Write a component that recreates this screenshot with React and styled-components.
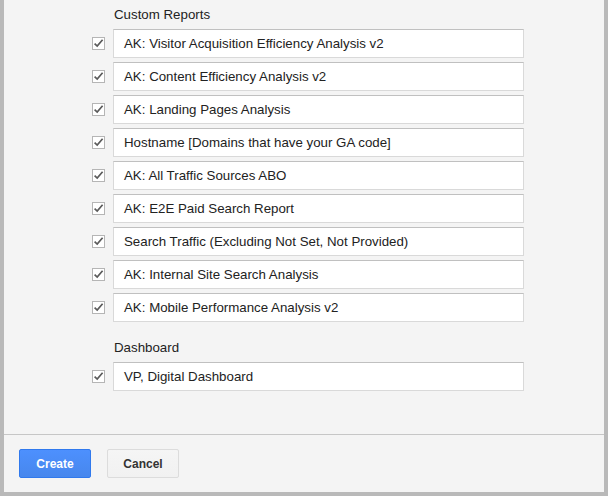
import React from 'react'
import styled, { createGlobalStyle } from 'styled-components'

const GlobalStyle = createGlobalStyle`
  html, body {
    margin: 0;
    padding: 0;
    background: #f4f4f4;
  }
  body {
    font-family: "Liberation Sans", Arial, sans-serif;
  }
`

const Frame = styled.div`
  box-sizing: border-box;
  width: 608px;
  height: 496px;
  background: #f4f4f4;
  border: 4px solid #b9b9b9;
  border-top: none;
  display: flex;
  flex-direction: column;
`

const Body = styled.div`
  flex: 1;
  padding: 7px 0 0 88px;
  display: flex;
  flex-direction: column;
  gap: 18px;
`

const Section = styled.div`
  display: flex;
  flex-direction: column;
`

const Heading = styled.div`
  margin-left: 22px;
  margin-bottom: 6px;
  font-size: 13.3px;
  line-height: 16px;
  color: #222;
`

const List = styled.div`
  display: flex;
  flex-direction: column;
  gap: 4px;
`

const Row = styled.label`
  display: flex;
  align-items: center;
  gap: 8px;
`

const Check = styled.svg`
  flex: none;
  width: 13px;
  height: 13px;
  margin-top: -1px;
`

const Field = styled.div`
  box-sizing: border-box;
  width: 411px;
  height: 29px;
  padding: 0 10px;
  display: flex;
  align-items: center;
  background: #fff;
  border: 1px solid #d9d9d9;
  border-top-color: #c0c0c0;
  font-size: 13.3px;
  color: #222;
  white-space: nowrap;
`

const Footer = styled.div`
  box-sizing: border-box;
  flex: none;
  height: 58px;
  border-top: 1px solid #c6c6c6;
  padding: 14px 0 0 15px;
  display: flex;
  align-items: flex-start;
  gap: 16px;
`

const Button = styled.button`
  box-sizing: border-box;
  height: 29px;
  min-width: ${p => p.w}px;
  padding: 0 8px;
  font-family: "Liberation Sans", Arial, sans-serif;
  font-size: 12px;
  font-weight: bold;
  border-radius: 2px;
  cursor: pointer;
  color: ${p => (p.primary ? '#fff' : '#333')};
  background: ${p => (p.primary ? 'linear-gradient(#4d90fe, #4787ed)' : 'linear-gradient(#f5f5f5, #f1f1f1)')};
  border: 1px solid ${p => (p.primary ? '#3079ed' : '#dcdcdc')};
`

const CheckBox = () => (
  <Check viewBox="0 0 13 13">
    <rect x="0.5" y="0.5" width="12" height="12" fill="#fff" stroke="#b5b5b5" />
    <path d="M2.6 6.6 L5.2 9.1 L10.6 2.8" fill="none" stroke="#5a5a5a" strokeWidth="1.7" />
  </Check>
)

const reports = [
  'AK: Visitor Acquisition Efficiency Analysis v2',
  'AK: Content Efficiency Analysis v2',
  'AK: Landing Pages Analysis',
  'Hostname [Domains that have your GA code]',
  'AK: All Traffic Sources ABO',
  'AK: E2E Paid Search Report',
  'Search Traffic (Excluding Not Set, Not Provided)',
  'AK: Internal Site Search Analysis',
  'AK: Mobile Performance Analysis v2',
]

const dashboards = ['VP, Digital Dashboard']

const Group = ({ title, items }) => (
  <Section>
    <Heading>{title}</Heading>
    <List>
      {items.map(name => (
        <Row key={name}>
          <CheckBox />
          <Field>{name}</Field>
        </Row>
      ))}
    </List>
  </Section>
)

export default function App() {
  return (
    <>
      <GlobalStyle />
      <Frame>
        <Body>
          <Group title="Custom Reports" items={reports} />
          <Group title="Dashboard" items={dashboards} />
        </Body>
        <Footer>
          <Button primary w={72}>Create</Button>
          <Button w={72}>Cancel</Button>
        </Footer>
      </Frame>
    </>
  )
}
